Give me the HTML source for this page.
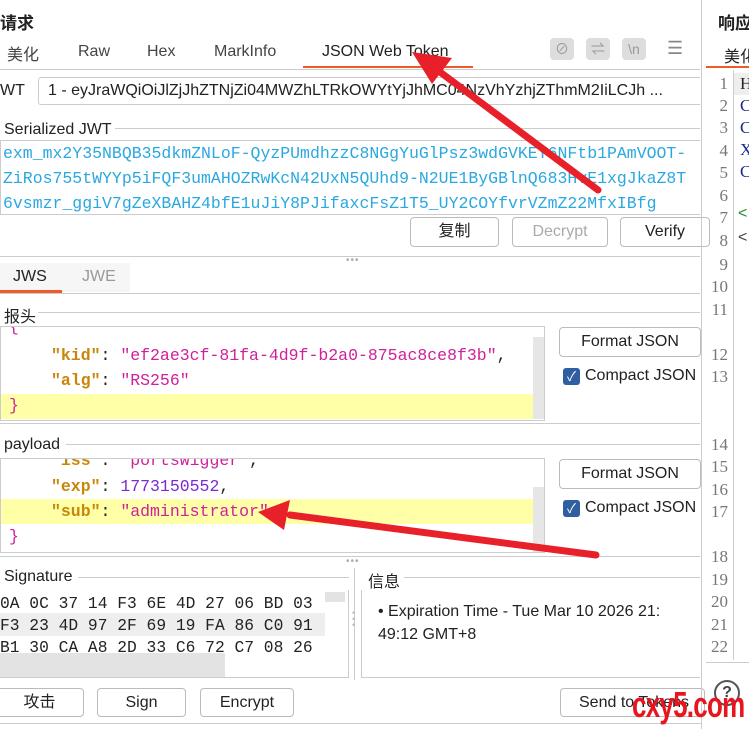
<!DOCTYPE html>
<html><head><meta charset="utf-8"><style>
*{box-sizing:border-box;margin:0;padding:0}
body{width:749px;height:729px;overflow:hidden;background:#fff;font-family:"Liberation Sans","Noto Sans CJK SC",sans-serif;color:#222;position:relative;font-size:16px}
.a{position:absolute;white-space:nowrap}
.mono{font-family:"Liberation Mono","Noto Sans CJK SC",monospace}
.btn{position:absolute;border:1px solid #bbb;border-radius:4px;background:#fff;text-align:center;font-size:16px}
.ln{position:absolute;left:702px;width:26px;text-align:right;font-family:"Liberation Serif",serif;font-size:17px;color:#777;line-height:20px}
.k{color:#c8860a;font-weight:bold}.s{color:#d0209a}.n{color:#7a2bd0}
.cb{position:absolute;width:17px;height:17px;background:#2f5fa0;border-radius:3px;color:#fff;font-size:13px;line-height:17px;text-align:center}
.hr{position:absolute;height:1px;background:#ccc}
.ico{position:absolute;width:24px;height:22px;background:#ddd;border-radius:4px;color:#999;font-size:14px;text-align:center;line-height:22px}
</style></head><body>
<div class="a" style="left:0;top:9px;font-size:17px;font-weight:bold">请求</div>
<div class="a" style="left:7px;top:41px;color:#444">美化</div>
<div class="a" style="left:78px;top:43px;color:#444">Raw</div>
<div class="a" style="left:147px;top:43px;color:#444">Hex</div>
<div class="a" style="left:214px;top:43px;color:#444">MarkInfo</div>
<div class="a" style="left:322px;top:43px">JSON Web Token</div>
<div class="a" style="left:303px;top:66px;width:170px;height:2px;background:#f05a28"></div>
<div class="ico" style="left:550px;top:38px">⊘</div>
<div class="ico" style="left:586px;top:38px">⇌</div>
<div class="ico" style="left:622px;top:38px">\n</div>
<div class="a" style="left:667px;top:38px;color:#888;font-size:18px">☰</div>
<div class="hr" style="left:0;top:69px;width:700px"></div>
<div class="a" style="left:0;top:82px">WT</div>
<div class="a" style="left:38px;top:77px;width:662px;height:28px;border:1px solid #ccc;border-right:none;border-radius:3px 0 0 3px;padding:4px 9px;overflow:hidden">1 - eyJraWQiOiJlZjJhZTNjZi04MWZhLTRkOWYtYjJhMC04NzVhYzhjZThmM2IiLCJh ...</div>
<div class="a" style="left:4px;top:121px">Serialized JWT</div>
<div class="hr" style="left:115px;top:128px;width:585px"></div>
<div class="a mono" style="left:0;top:140px;width:700px;height:75px;border:1px solid #ccc;border-right:none;color:#2aa8e0;font-size:16.5px;line-height:25px;padding-left:2px;overflow:hidden">exm_mx2Y35NBQB35dkmZNLoF-QyzPUmdhzzC8NGgYuGlPsz3wdGVKEY6NFtb1PAmVOOT-<br>ZiRos755tWYYp5iFQF3umAHOZRwKcN42UxN5QUhd9-N2UE1ByGBlnQ683HvE1xgJkaZ8T<br>6vsmzr_ggiV7gZeXBAHZ4bfE1uJiY8PJifaxcFsZ1T5_UY2COYfvrVZmZ22MfxIBfg</div>
<div class="btn" style="left:410px;top:217px;width:89px;height:30px;line-height:28px">复制</div>
<div class="btn" style="left:512px;top:217px;width:96px;height:30px;line-height:28px;color:#aaa">Decrypt</div>
<div class="btn" style="left:620px;top:217px;width:90px;height:30px;line-height:28px;text-align:left;padding-left:24px">Verify</div>
<div class="hr" style="left:0;top:256px;width:700px"></div>
<div class="a" style="left:346px;top:255px;color:#aaa;font-size:10px;letter-spacing:1px">•••</div>
<div class="a" style="left:0;top:263px;width:130px;height:29px;background:#f6f6f6"></div>
<div class="a" style="left:13px;top:268px">JWS</div>
<div class="a" style="left:82px;top:268px;color:#999">JWE</div>
<div class="a" style="left:0;top:290px;width:62px;height:3px;background:#f05a28"></div>
<div class="hr" style="left:0;top:293px;width:700px"></div>
<div class="a" style="left:4px;top:303px">报头</div>
<div class="hr" style="left:38px;top:312px;width:662px"></div>
<div class="a mono" style="left:0;top:326px;width:545px;height:95px;border:1px solid #ccc;overflow:hidden;font-size:16.5px;line-height:24px">
 <div class="a" style="left:0;top:67px;width:532px;height:25px;background:#ffffa8"></div>
 <div class="a" style="left:532px;top:10px;width:12px;height:82px;background:#e6e6e6"></div>
 <div class="a s" style="left:8px;top:-12px">{</div>
 <div class="a" style="left:50px;top:17px"><span class="k">"kid"</span>: <span class="s">"ef2ae3cf-81fa-4d9f-b2a0-875ac8ce8f3b"</span>,</div>
 <div class="a" style="left:50px;top:42px"><span class="k">"alg"</span>: <span class="s">"RS256"</span></div>
 <div class="a s" style="left:8px;top:67px">}</div>
</div>
<div class="btn" style="left:559px;top:327px;width:142px;height:30px;line-height:28px">Format JSON</div>
<div class="cb" style="left:563px;top:368px">✓</div>
<div class="a" style="left:585px;top:367px">Compact JSON</div>
<div class="hr" style="left:0;top:423px;width:700px"></div>
<div class="a" style="left:4px;top:436px">payload</div>
<div class="hr" style="left:66px;top:444px;width:634px"></div>
<div class="a mono" style="left:0;top:458px;width:545px;height:95px;border:1px solid #ccc;overflow:hidden;font-size:16.5px;line-height:24px">
 <div class="a" style="left:0;top:40px;width:532px;height:25px;background:#ffffa8"></div>
 <div class="a" style="left:532px;top:28px;width:12px;height:66px;background:#e6e6e6"></div>
 <div class="a" style="left:50px;top:-10px"><span class="k">"iss"</span>: <span class="s">"portswigger"</span>,</div>
 <div class="a" style="left:50px;top:16px"><span class="k">"exp"</span>: <span class="n">1773150552</span>,</div>
 <div class="a" style="left:50px;top:41px"><span class="k">"sub"</span>: <span class="s">"administrator"</span></div>
 <div class="a s" style="left:8px;top:66px">}</div>
</div>
<div class="btn" style="left:559px;top:459px;width:142px;height:30px;line-height:28px">Format JSON</div>
<div class="cb" style="left:563px;top:500px">✓</div>
<div class="a" style="left:585px;top:499px">Compact JSON</div>
<div class="hr" style="left:0;top:556px;width:700px"></div>
<div class="a" style="left:346px;top:556px;color:#aaa;font-size:10px;letter-spacing:1px">•••</div>
<div class="a" style="left:4px;top:568px">Signature</div>
<div class="hr" style="left:78px;top:577px;width:271px"></div>
<div class="a mono" style="left:0;top:590px;width:349px;height:88px;border-bottom:1px solid #ccc;border-right:1px solid #ccc;overflow:hidden;font-size:16.3px;line-height:22px">
 <div class="a" style="left:0;top:23px;width:325px;height:23px;background:#eee"></div>
 <div class="a" style="left:325px;top:2px;width:20px;height:10px;background:#e3e3e3"></div>
 <div class="a" style="left:0;top:3px">0A 0C 37 14 F3 6E 4D 27 06 BD 03</div>
 <div class="a" style="left:0;top:25px">F3 23 4D 97 2F 69 19 FA 86 C0 91</div>
 <div class="a" style="left:0;top:47px">B1 30 CA A8 2D 33 C6 72 C7 08 26</div>
 <div class="a" style="left:0;top:63px;width:225px;height:25px;background:#e3e3e3"></div>
 <div class="a" style="left:225px;top:63px;width:100px;height:25px;background:#fff"></div>
</div>
<div class="a" style="left:354px;top:568px;width:1px;height:112px;background:#ccc"></div>
<div class="a" style="left:352px;top:610px;color:#bbb;font-size:9px;line-height:6px">•<br>•<br>•</div>
<div class="a" style="left:368px;top:568px">信息</div>
<div class="hr" style="left:404px;top:577px;width:296px"></div>
<div class="a" style="left:361px;top:590px;width:339px;height:88px;border-left:1px solid #ccc;border-bottom:1px solid #ccc"></div>
<div class="a" style="left:378px;top:603px">• Expiration Time - Tue Mar 10 2026 21:</div>
<div class="a" style="left:378px;top:626px">49:12 GMT+8</div>
<div class="btn" style="left:-5px;top:688px;width:89px;height:29px;line-height:27px">攻击</div>
<div class="btn" style="left:97px;top:688px;width:89px;height:29px;line-height:27px">Sign</div>
<div class="btn" style="left:200px;top:688px;width:94px;height:29px;line-height:27px">Encrypt</div>
<div class="btn" style="left:560px;top:688px;width:145px;height:29px;line-height:27px;text-align:left;padding-left:18px">Send to Tokens</div>
<div class="hr" style="left:0;top:723px;width:701px"></div>
<div class="a" style="left:701px;top:0;width:1px;height:729px;background:#ccc"></div>
<div class="a" style="left:718px;top:9px;font-size:17px;font-weight:bold">响应</div>
<div class="a" style="left:724px;top:43px">美化</div>
<div class="a" style="left:706px;top:66px;width:43px;height:2px;background:#f05a28"></div>
<div class="a" style="left:733px;top:70px;width:1px;height:590px;background:#ccc"></div>
<div class="a" style="left:734px;top:73px;width:15px;height:22px;background:#eee"></div>
<div class="a" style="left:740px;top:73px;font-family:'Liberation Serif',serif;font-size:17px;line-height:22px">H</div>
<div class="a" style="left:740px;top:95px;font-family:'Liberation Serif',serif;font-size:17px;line-height:22px;color:#1a2a8a">C<br>C<br>X<br>C</div>
<div class="a" style="left:738px;top:205px;color:#2a8a2a;font-size:16px">&lt;</div>
<div class="a" style="left:738px;top:229px;color:#444;font-size:16px">&lt;</div>
<div class="ln" style="top:74px">1</div><div class="ln" style="top:96px">2</div><div class="ln" style="top:118px">3</div><div class="ln" style="top:141px">4</div><div class="ln" style="top:163px">5</div><div class="ln" style="top:186px">6</div><div class="ln" style="top:208px">7</div><div class="ln" style="top:231px">8</div><div class="ln" style="top:255px">9</div><div class="ln" style="top:277px">10</div><div class="ln" style="top:300px">11</div><div class="ln" style="top:345px">12</div><div class="ln" style="top:367px">13</div><div class="ln" style="top:435px">14</div><div class="ln" style="top:457px">15</div><div class="ln" style="top:480px">16</div><div class="ln" style="top:502px">17</div><div class="ln" style="top:547px">18</div><div class="ln" style="top:570px">19</div><div class="ln" style="top:592px">20</div><div class="ln" style="top:615px">21</div><div class="ln" style="top:637px">22</div>
<div class="hr" style="left:706px;top:662px;width:43px"></div>
<div class="a" style="left:714px;top:680px;width:26px;height:26px;border:2px solid #555;border-radius:50%;text-align:center;font-weight:bold;line-height:22px;color:#444">?</div>
<svg class="a" style="left:0;top:0" width="749" height="729">
 <g stroke="#e8202a" stroke-width="7" stroke-linecap="round" fill="#e8202a">
  <line x1="598" y1="190" x2="440" y2="72"/>
  <line x1="596" y1="555" x2="290" y2="515"/>
 </g>
 <polygon points="412,52 452,58 432,84" fill="#e8202a"/>
 <polygon points="258,512 290,500 284,530" fill="#e8202a"/>
</svg>
<div class="a" style="left:632px;top:684px;font-family:'Liberation Sans',sans-serif;font-weight:bold;font-size:36px;color:#e8141e;letter-spacing:-1px;transform:scaleX(0.72);transform-origin:left">cxy5.com</div>
</body></html>
